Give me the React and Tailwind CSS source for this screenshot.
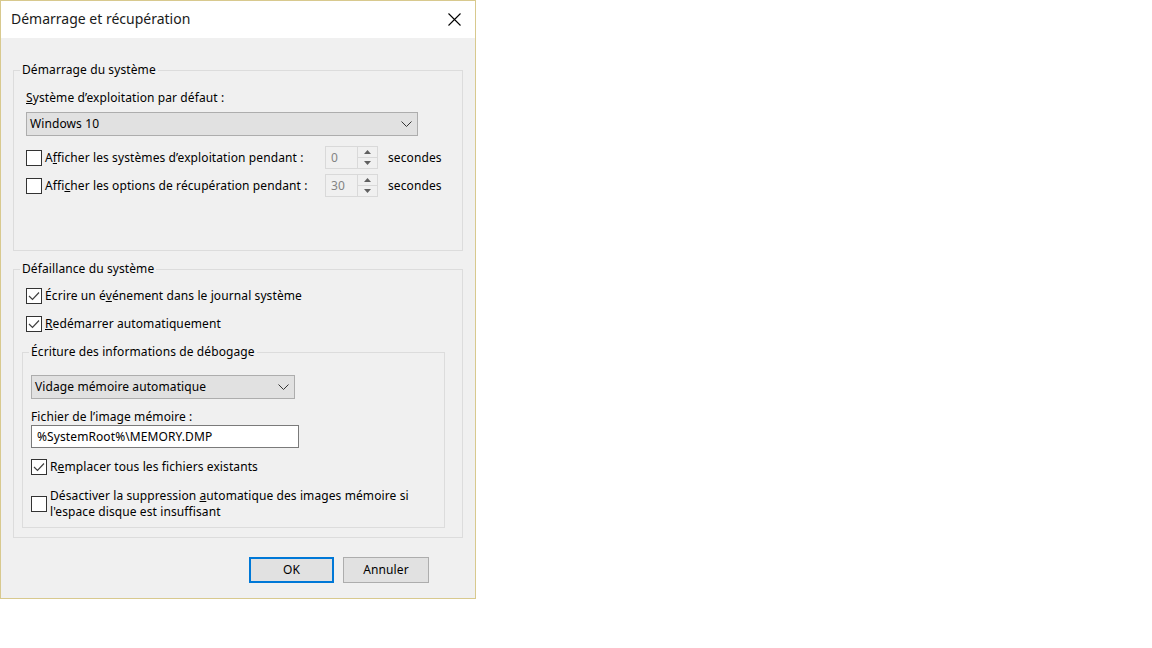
import React from 'react';

const font = { fontFamily: '"Noto Sans", "Open Sans", sans-serif' };

const Check = ({ checked }) => (
  <span className="w-[16px] h-[16px] border border-[#333333] bg-white flex items-center justify-center shrink-0">
    {checked && (
      <svg width="12" height="10" viewBox="0 0 12 10">
        <path d="M1 5 L4.5 8.5 L11 1.5" fill="none" stroke="#404040" strokeWidth="1.2" />
      </svg>
    )}
  </span>
);

const Chevron = () => (
  <svg width="11" height="6" viewBox="0 0 11 6">
    <path d="M0.5 0.5 L5.5 5.5 L10.5 0.5" fill="none" stroke="#333" strokeWidth="1" />
  </svg>
);

const Combo = ({ value, width }) => (
  <div className={`${width} h-[24px] bg-[#e1e1e1] border border-[#adadad] flex items-center justify-between pl-[3px] pr-[5px]`}>
    <span>{value}</span>
    <Chevron />
  </div>
);

const Spinner = ({ value }) => (
  <div className="w-[53px] h-[23px] border border-[#d9d9d9] flex">
    <span className="flex-1 pl-[5px] leading-[21px] text-[#838383]">{value}</span>
    <div className="w-[20px] border-l border-[#d9d9d9] flex flex-col">
      <div className="flex-1 flex items-center justify-center border-b border-[#d9d9d9]">
        <svg width="7" height="4" viewBox="0 0 7 4"><path d="M0 4 L3.5 0 L7 4 Z" fill="#606060" /></svg>
      </div>
      <div className="flex-1 flex items-center justify-center">
        <svg width="7" height="4" viewBox="0 0 7 4"><path d="M0 0 L3.5 4 L7 0 Z" fill="#606060" /></svg>
      </div>
    </div>
  </div>
);

export default function App() {
  return (
    <div className="w-[1152px] h-[648px] bg-white text-[12px] leading-[16px] tracking-[0.1px] text-black" style={font}>
      <div className="w-[476px] h-[599px] border border-[#d8c98e] bg-[#f0f0f0] flex flex-col">
        {/* title bar */}
        <div className="h-[37px] bg-white flex items-center justify-between pl-[10px] pr-[14px] pb-[1px]">
          <span className="text-[14px] tracking-normal text-[#1a1a1a] leading-[20px]">Démarrage et récupération</span>
          <svg width="13" height="13" viewBox="0 0 13 13">
            <path d="M0.5 0.5 L12.5 12.5 M12.5 0.5 L0.5 12.5" stroke="#000" strokeWidth="1.1" />
          </svg>
        </div>

        <fieldset className="ml-[12px] mt-[24px] w-[450px] border border-[#dcdcdc] pl-[6px] pr-[12px] pt-[12px] pb-[53px]">
          <legend className="px-[2px]">Démarrage du système</legend>
          <div className="pl-[6px]">
            <div><span className="underline">S</span>ystème d’exploitation par défaut :</div>
            <div className="mt-[6px]">
              <Combo value="Windows 10" width="w-[392px]" />
            </div>
            <div className="mt-[10px] flex items-center h-[23px]">
              <Check />
              <span className="ml-[3px] w-[280px]">A<span className="underline">f</span>ficher les systèmes d’exploitation pendant :</span>
              <Spinner value="0" />
              <span className="ml-[10px]">secondes</span>
            </div>
            <div className="mt-[5px] flex items-center h-[23px]">
              <Check />
              <span className="ml-[3px] w-[280px]">Affi<span className="underline">c</span>her les options de récupération pendant :</span>
              <Spinner value="30" />
              <span className="ml-[10px]">secondes</span>
            </div>
          </div>
        </fieldset>

        <fieldset className="ml-[12px] mt-[10px] w-[450px] border border-[#dcdcdc] pl-[6px] pr-[16px] pt-[11px] pb-[9px]">
          <legend className="px-[2px]">Défaillance du système</legend>
          <div className="pl-[6px] flex flex-col">
            <div className="flex items-center h-[16px]">
              <Check checked />
              <span className="ml-[3px]">Écrire un é<span className="underline">v</span>énement dans le journal système</span>
            </div>
            <div className="mt-[12px] flex items-center h-[16px]">
              <Check checked />
              <span className="ml-[3px]"><span className="underline">R</span>edémarrer automatiquement</span>
            </div>
          </div>

          <fieldset className="mt-[12px] ml-[2px] w-[423px] border border-[#dcdcdc] pl-[6px] pt-[15px] pb-[7px]">
            <legend className="px-[2px]">Écriture des informations de débogage</legend>
            <div className="pl-[2px]">
              <Combo value="Vidage mémoire automatique" width="w-[264px]" />
              <div className="mt-[10px]">Fichier de l’image mémoire :</div>
              <div className="w-[268px] h-[23px] bg-white border border-[#7a7a7a] pl-[5px] leading-[21px]">%SystemRoot%\MEMORY.DMP</div>
              <div className="mt-[11px] flex items-center h-[16px]">
                <Check checked />
                <span className="ml-[3px]">R<span className="underline">e</span>mplacer tous les fichiers existants</span>
              </div>
              <div className="mt-[13px] flex items-center">
                <Check />
                <span className="ml-[3px]">Désactiver la suppression <span className="underline">a</span>utomatique des images mémoire si<br />l'espace disque est insuffisant</span>
              </div>
            </div>
          </fieldset>
        </fieldset>

        <div className="mt-[19px] flex justify-end gap-[9px] pr-[46px]">
          <button className="w-[85px] h-[26px] bg-[#e1e1e1] border-2 border-[#0078d7]">OK</button>
          <button className="w-[86px] h-[26px] bg-[#e1e1e1] border border-[#adadad]">Annuler</button>
        </div>
      </div>
    </div>
  );
}
